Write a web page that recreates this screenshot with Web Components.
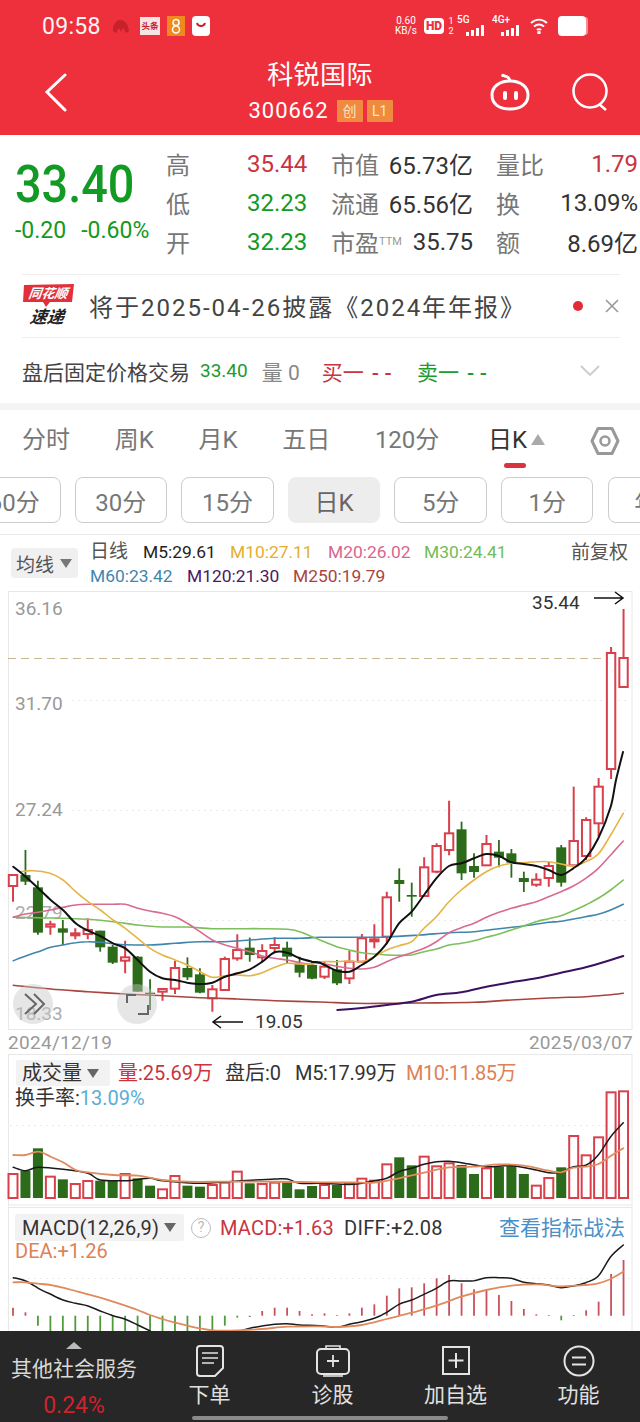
<!doctype html>
<html lang="zh"><head><meta charset="utf-8"><title>科锐国际</title>
<style>
html,body{margin:0;padding:0;background:#fff}
body{width:640px;height:1422px;overflow:hidden;font-family:Roboto,"Noto Sans CJK SC",sans-serif;color:#333}
</style></head><body>
<top-bar></top-bar>
<quote-panel></quote-panel>
<news-row></news-row>
<trade-row></trade-row>
<div style="height:7px;background:#f4f4f4"></div>
<period-tabs></period-tabs>
<sub-tabs>
  <period-chip>60分</period-chip><period-chip>30分</period-chip><period-chip>15分</period-chip><period-chip active>日K</period-chip><period-chip>5分</period-chip><period-chip>1分</period-chip><period-chip>年K</period-chip>
</sub-tabs>
<ma-legend></ma-legend>
<kline-chart></kline-chart>
<date-axis></date-axis>
<vol-panel></vol-panel>
<macd-panel></macd-panel>
<bottom-bar>
  <bar-item><svg slot="icon" width="30" height="34" viewBox="0 0 30 34" fill="none" stroke="#e4e4e4" stroke-width="2"><path d="M5 2h20a3 3 0 0 1 3 3v19l-8 8H5a3 3 0 0 1-3-3V5a3 3 0 0 1 3-3z"/><path d="M7 9h16M7 14h16M7 19h12" stroke-width="1.6"/></svg>下单</bar-item>
  <bar-item><svg slot="icon" width="36" height="34" viewBox="0 0 36 34" fill="none" stroke="#e4e4e4" stroke-width="2"><path d="M11 4V2h14v2" stroke-width="1.6"/><rect x="2" y="5" width="32" height="25" rx="4"/><path d="M8 32h20" stroke-width="1.6"/><path d="M18 11v12M12 17h12" stroke-width="1.8"/></svg>诊股</bar-item>
  <bar-item><svg slot="icon" width="30" height="34" viewBox="0 0 30 34" fill="none" stroke="#e4e4e4" stroke-width="2"><rect x="2" y="3" width="26" height="27"/><path d="M15 9v15M7.500 16.500h15"/></svg>加自选</bar-item>
  <bar-item><svg slot="icon" width="32" height="34" viewBox="0 0 32 34" fill="none" stroke="#e4e4e4" stroke-width="2"><circle cx="16" cy="17" r="14.500"/><path d="M9 13.500h14M9 20.500h14"/></svg>功能</bar-item>
</bottom-bar>
<script>
function def(name,css,html){customElements.define(name,class extends HTMLElement{constructor(){super();this.attachShadow({mode:'open'}).innerHTML='<style>:host{display:block}'+css+'</style>'+html}})}
const RED='#d8404c',GRN='#2b6b19';
const smooth=(pts,color,w=1.6)=>{let d='M'+pts[0][0].toFixed(1)+' '+pts[0][1].toFixed(1);
  for(let i=0;i<pts.length-1;i++){const p0=pts[i-1]||pts[i],p1=pts[i],p2=pts[i+1],p3=pts[i+2]||p2;
    const c1=[p1[0]+(p2[0]-p0[0])/6,p1[1]+(p2[1]-p0[1])/6],c2=[p2[0]-(p3[0]-p1[0])/6,p2[1]-(p3[1]-p1[1])/6];
    d+=`C${c1[0].toFixed(1)} ${c1[1].toFixed(1)} ${c2[0].toFixed(1)} ${c2[1].toFixed(1)} ${p2[0].toFixed(1)} ${p2[1].toFixed(1)}`}
  return `<path d="${d}" fill="none" stroke="${color}" stroke-width="${w}" stroke-linecap="round"/>`};
const cx=i=>13+12.46*i;

/* ---------- top bar ---------- */
def('top-bar',`
:host{background:#ee303d;color:#fff;height:135px;box-sizing:border-box}
.st{height:52px;display:flex;align-items:center;padding-left:42px;position:relative}
.t{font-size:23px;letter-spacing:.3px;width:70px;opacity:.95}
.st svg{display:block}
.tt{width:20px;height:18px;background:#f6e3e3;color:#c7212c;font-size:8.500px;line-height:18px;text-align:center;margin-right:7px;font-weight:700;white-space:nowrap;overflow:hidden}
.r{margin-left:auto;display:flex;align-items:center;padding-right:50px}
.sp{font-size:10px;line-height:10px;text-align:center;width:24px;margin-right:6px}
.hd{background:#fff;color:#ee303d;font-weight:900;font-size:12px;border-radius:4px;width:20px;height:16px;line-height:16px;text-align:center}
.fr{font-size:9px;line-height:10px;width:10px;margin:0 1px 0 2px;text-align:center}
.sig{font-size:10px;line-height:10px;position:relative;width:29px;height:20px;margin-right:6px}
.sig svg{position:absolute;left:7px;bottom:0}
.sig b{font-weight:500;position:absolute;left:0;top:-1px}
.hdr{height:83px;display:grid;grid-template-columns:150px 340px 150px;align-items:start}
.back{padding:21px 0 0 44px}
.mid{text-align:center;padding-top:7px}
.name{font-size:26px;line-height:32px;letter-spacing:.4px}
.code{display:flex;justify-content:center;align-items:center;gap:4px;margin-top:8px;height:24px;padding-left:1px}
.code span{font-size:22px;letter-spacing:1px;margin-right:4px;line-height:24px}
.code i{font-style:normal;background:#f08a3e;color:#fde3c5;font-size:14px;width:26px;height:22px;line-height:22px;text-align:center;border-radius:1px}
.ic{display:flex;padding:21px 32px 0 0;gap:42px;justify-content:flex-end}
.ic svg{flex:none}
`,`<div class="st"><div class="t">09:58</div>
<svg width="20" height="20" viewBox="0 0 20 20" style="margin:0 9px 0 -1px"><path d="M2 15c0-7 3-11 7-11 5 0 8 4 9 11l-3 2-3-5-2 4-2-4-3 5z" fill="#c7212c"/></svg>
<div class="tt">头条</div>
<svg width="18" height="20" viewBox="0 0 18 20" style="margin-right:7px"><rect width="18" height="20" fill="#f08a1e"/><circle cx="9" cy="6.500" r="3" fill="none" stroke="#fff" stroke-width="1.500"/><circle cx="9" cy="13.500" r="3.500" fill="none" stroke="#fff" stroke-width="1.500"/></svg>
<svg width="18" height="20" viewBox="0 0 18 20"><rect width="18" height="20" rx="4" fill="#fff"/><path d="M5 7c1 4 7 4 8 0" fill="none" stroke="#c7212c" stroke-width="2"/></svg>
<div class="r"><div class="sp">0.60<br>KB/s</div><div class="hd">HD</div><div class="fr">1<br>2</div>
<div class="sig"><b>5G</b><svg width="22" height="11" viewBox="0 0 22 11" fill="#fff"><rect x="2" y="7" width="3" height="4"/><rect x="7" y="5" width="3" height="6"/><rect x="12" y="3" width="3" height="8"/><rect x="17" y="0" width="3" height="11"/></svg></div>
<div class="sig"><b>4G+</b><svg width="22" height="11" viewBox="0 0 22 11" fill="#fff"><rect x="2" y="7" width="3" height="4"/><rect x="7" y="5" width="3" height="6"/><rect x="12" y="3" width="3" height="8"/><rect x="17" y="0" width="3" height="11"/></svg></div>
<svg width="18" height="16" viewBox="0 0 18 16" fill="none" stroke="#fff" stroke-width="2" style="margin:0 10px 0 3px"><path d="M1 5c5-4.500 11-4.500 16 0M4 8.500c3-2.500 7-2.500 10 0M7 12c1-1 3-1 4 0"/><circle cx="9" cy="14.500" r=".8" fill="#fff"/></svg>
<svg width="32" height="20" viewBox="0 0 32 20"><rect width="28" height="20" rx="4" fill="#fff"/><rect x="24" y="1" width="6" height="18" rx="3" fill="#fff" opacity=".45"/></svg>
</div></div>
<div class="hdr"><div class="back"><svg width="24" height="40" viewBox="0 0 24 40" fill="none" stroke="#fff" stroke-width="3" stroke-linecap="round"><path d="M21 2 3 19l18 18"/></svg></div>
<div class="mid"><div class="name">科锐国际</div><div class="code"><span>300662</span><i>创</i><i>L1</i></div></div>
<div class="ic"><svg width="40" height="38" viewBox="0 0 40 38" fill="none" stroke="#fff" stroke-width="3"><circle cx="13" cy="2.500" r="1.800" fill="#fff" stroke="none"/><path d="M14 3c3 0 6 2 6 6"/><path d="M20 8c11 0 18 6 18 14 0 9-7 14-18 14S2 31 2 22C2 14 9 8 20 8z"/><rect x="13" y="18" width="4" height="9" rx="2" fill="#fff" stroke="none"/><rect x="24" y="18" width="4" height="9" rx="2" fill="#fff" stroke="none"/></svg>
<svg width="36" height="38" viewBox="0 0 36 38" fill="none" stroke="#fff" stroke-width="2.500"><circle cx="18" cy="18" r="16.500"/><path d="M27 31l7 6"/></svg></div></div>`);

/* ---------- quote ---------- */
def('quote-panel',`
:host{height:139px;box-sizing:border-box;padding-top:9px;display:flex}
.l{width:166px;padding-left:15px;box-sizing:border-box;color:#129a24}
.big{font-size:52px;font-weight:500;line-height:56px;margin-top:13px;transform:scaleX(.9);transform-origin:0 50%;white-space:nowrap}
.ch{display:flex;gap:15px;font-size:23px;line-height:24px;margin-top:6px;white-space:nowrap}
.g{display:grid;grid-template-columns:81px 84px 142px 23px 142px;grid-auto-rows:39px;align-items:center;font-size:24px;white-space:nowrap}
.lb{color:#777}.v{color:#333}
.pair{display:flex;justify-content:space-between;align-items:center}
.rd{color:#c8353f}.gn{color:#129a24}
sup{font-size:11px;vertical-align:7px;line-height:0;color:#999}
`,`<div class="l"><div class="big">33.40</div><div class="ch"><span>-0.20</span><span>-0.60%</span></div></div>
<div class="g">
<span class="lb">高</span><span class="rd">35.44</span><span class="pair"><span class="lb">市值</span><span class="v">65.73亿</span></span><span></span><span class="pair"><span class="lb">量比</span><span class="rd">1.79</span></span>
<span class="lb">低</span><span class="gn">32.23</span><span class="pair"><span class="lb">流通</span><span class="v">65.56亿</span></span><span></span><span class="pair"><span class="lb">换</span><span class="v">13.09%</span></span>
<span class="lb">开</span><span class="gn">32.23</span><span class="pair"><span class="lb">市盈<sup>TTM</sup></span><span class="v">35.75</span></span><span></span><span class="pair"><span class="lb">额</span><span class="v">8.69亿</span></span>
</div>`);

/* ---------- news ---------- */
def('news-row',`
:host{margin:0 20px 0 22px;height:64px;box-sizing:border-box;border-top:1px solid #eee;border-bottom:1px solid #eee;display:flex;align-items:center}
.logo{width:52px;height:44px;position:relative;margin-right:15px;flex:none;text-align:center;font-style:italic;font-weight:700}
.logo svg{display:block}
.a{position:absolute;left:0;right:0;top:1px;font-size:13px;line-height:18px;color:#fff;transform:skewX(-8deg)}
.b{position:absolute;left:0;right:2px;top:23px;font-size:17px;line-height:21px;color:#222;transform:skewX(-8deg)}
.t{font-size:24px;color:#444;white-space:nowrap;letter-spacing:2px;margin-top:-2px}
.dot{width:10px;height:10px;border-radius:50%;background:#e22b37;margin-left:auto;margin-right:21px;flex:none}
svg.x{margin-right:0;flex:none}
`,`<div class="logo"><svg width="52" height="24" viewBox="0 0 52 24"><path d="M2 1 52 0l-2 18H28l-4 5-3-5H1z" fill="#e2303b"/></svg><span class="a">同花顺</span><span class="b">速递</span></div>
<span class="t">将于2025-04-26披露《2024年年报》</span><i class="dot"></i>
<svg class="x" width="16" height="16" viewBox="0 0 16 16" stroke="#999" stroke-width="1.600"><path d="M2 2l12 12M14 2 2 14"/></svg>`);

def('trade-row',`
:host{height:65px;display:flex;align-items:center;padding:0 40px 0 22px;font-size:21px;white-space:nowrap;color:#444}
.g{color:#1d9a30}.m{color:#888}.r{color:#c9343e}
span{display:inline-block}
b{font-weight:500;letter-spacing:5.500px;margin-left:8px}
svg{margin-left:auto}
`,`<span style="margin-right:10px">盘后固定价格交易</span><span class="g" style="font-size:19px;margin-right:14px">33.40</span><span class="m" style="margin-right:22px">量 0</span><span class="r" style="margin-right:20px">买一<b>--</b></span><span class="g">卖一<b>--</b></span>
<svg width="20" height="12" viewBox="0 0 20 12" fill="none" stroke="#ccc" stroke-width="1.800"><path d="M1 1l9 9 9-9"/></svg>`);

/* ---------- tabs ---------- */
def('period-tabs',`
:host{height:67px;box-sizing:border-box;padding:18px 22px 0;display:flex;gap:44.700px;font-size:24px;color:#777;line-height:25px;position:relative;white-space:nowrap}
.on{color:#333;position:relative;display:flex;margin-left:4px}
.on svg{margin:6px 0 0 4px}
.on::after{content:"";position:absolute;left:16px;top:35px;width:22px;height:5px;border-radius:3px;background:#d9333f}
.gear{margin-left:auto;margin-right:-2px;margin-top:-3px}
`,`<span>分时</span><span>周K</span><span>月K</span><span>五日</span><span>120分</span><span class="on">日K<svg width="14" height="11" viewBox="0 0 14 11"><path d="M7 0l7 11H0z" fill="#aaa"/></svg></span>
<svg class="gear" width="30" height="32" viewBox="0 0 30 32" fill="none" stroke="#999" stroke-width="3"><path d="M8 3.500h14L28 16l-6 12.500H8L2 16z" stroke-linejoin="round"/><circle cx="15" cy="16" r="4.500" stroke-width="2.500"/></svg>`);

def('sub-tabs',`:host{height:57px;margin-left:-32px;width:720px;display:block;overflow:hidden}
.w{display:flex;gap:14.100px;height:46px}`,`<div class="w"><slot></slot></div>`);
customElements.define('period-chip',class extends HTMLElement{constructor(){super();this.attachShadow({mode:'open'}).innerHTML=`<style>
:host{display:flex;flex:none;width:92.500px;height:46px;box-sizing:border-box;border:1px solid #ccc;border-radius:8px;align-items:center;justify-content:center;font-size:24px;color:#777}
:host([active]){background:#ededed;border-color:#ededed;color:#666}
</style><slot></slot>`}});

/* ---------- MA legend ---------- */
def('ma-legend',`
:host{height:57px;box-sizing:border-box;border-top:1px solid #e8e8e8;display:flex;padding-left:11px;position:relative;white-space:nowrap}
.pill{width:67px;height:30px;margin-top:13px;background:#f0f0f0;border-radius:4px;font-size:19px;color:#555;display:flex;align-items:center;padding-left:5px;box-sizing:border-box;gap:6px;margin-right:12px}
.rows{font-size:17.400px;line-height:24px;padding-top:5px}
.rows div{display:flex}
.q{position:absolute;right:12px;top:6px;font-size:19px;line-height:24px;color:#555}
`,`<div class="pill">均线<svg width="12" height="9" viewBox="0 0 12 9"><path d="M0 0h12L6 9z" fill="#777"/></svg></div>
<div class="rows"><div><span style="width:53px;color:#555;font-size:19px">日线</span><span style="width:87px;color:#222">M5:29.61</span><span style="width:98px;color:#e3ae33">M10:27.11</span><span style="width:96px;color:#d9668d">M20:26.02</span><span style="color:#72bb58">M30:24.41</span></div>
<div><span style="width:97px;color:#3f85ac">M60:23.42</span><span style="width:106px;color:#4b1766">M120:21.30</span><span style="color:#a8443e">M250:19.79</span></div></div>
<div class="q">前复权</div>`);

/* ---------- K line ---------- */
customElements.define('kline-chart',class extends HTMLElement{constructor(){super();
 const A=[['r',135,135,168,215],['g',60,135,155,165],['g',152,172,308,314],['r',272,283,290,314],['g',270,295,308,345],['r',295,310,316,328],['r',265,300,312,328],['g',302,302,352,365],['g',345,350,398,402],['r',332,382,392,430],['g',378,380,485,485],['g',448,488,492,540],['r',475,477,485,512],['r',392,414,476,492],['g',382,414,442,450],['g',415,433,488,490],['r',465,478,505,545],['r',380,387,480,480],['r',313,360,385,392],['g',323,353,375,395],['r',343,363,382,397],['r',322,345,354,368],['g',335,353,380,400],['g',380,402,428,442],['g',395,405,446,448]].map(c=>[c[0],...c.slice(1).map(v=>830+v/3)]);
 const B=[['r',545,560,590,597],['g',540,568,610,615],['r',512,545,595,612],['r',462,475,545,545],['r',433,478,484,505],['r',335,352,470,490],['g',265,300,312,365],['g',308,345,350,410],['r',232,262,348,350],['r',190,198,275,280],['r',62,160,210,226],['g',125,148,280,300],['g',220,258,276,293],['r',165,192,256,258],['g',180,215,233,262],['g',207,220,248,293],['g',275,294,306,336],['r',280,299,314,320],['r',245,258,294,320],['g',195,202,308,320],['r',20,183,256,256],['r',112,120,228,240]].map(c=>[c[0],...c.slice(1).map(v=>780+v/3)]);
 const C=[['r',778,786.700,823.300,836.700],['r',647,653,769,779],['r',609,658,687,687]];
 let cs='';[...A,...B,...C].forEach((c,i)=>{const x=cx(i),[t,h,o,b,l]=c;
  if(t==='g'){cs+=`<path d="M${x} ${h}V${l}" stroke="${GRN}" stroke-width="1.800"/><rect x="${x-5}" y="${o}" width="10" height="${b-o}" fill="${GRN}"/>`}
  else{cs+=`<path d="M${x} ${h}V${o}M${x} ${b}V${l}" stroke="${RED}" stroke-width="2"/><rect x="${x-4.200}" y="${o}" width="8.400" height="${Math.max(b-o,1)}" fill="#fff" stroke="${RED}" stroke-width="2"/>`}});
 const L=(a,b)=>[...a.map(p=>[p[0]/3,830+p[1]/3]),...b.map(p=>[320+p[0]/3,780+p[1]/3])];
 const m5=L([[40,110],[77,140],[115,175],[152,210],[189,240],[227,280],[264,302],[301,318],[339,340],[376,355],[413,390],[450,425],[487,445],[525,450],[562,458],[600,462],[637,458],[675,440],[712,430],[750,418],[787,395],[824,367],[862,368],[899,385],[936,395]],[[0,548],[50,572],[88,575],[125,555],[163,530],[200,490],[237,430],[275,395],[312,345],[349,295],[387,258],[424,250],[462,235],[499,222],[537,228],[574,247],[611,252],[649,258],[686,270],[723,285],[760,265],[797,235],[835,175],[872,80],[888,0]]);m5.push([623,752]);
 const m10=L([[60,125],[100,122],[150,130],[189,150],[227,185],[264,215],[301,240],[339,270],[376,295],[413,325],[450,355],[487,375],[525,390],[562,405],[600,425],[637,442],[675,437],[712,435],[750,437],[787,428],[824,412],[862,400],[899,402],[936,402]],[[0,545],[50,545],[88,543],[125,545],[163,530],[200,510],[237,497],[275,485],[312,445],[349,410],[387,365],[424,330],[462,300],[499,275],[537,258],[574,250],[611,248],[649,245],[686,245],[723,252],[760,258],[797,245],[835,222],[872,165],[910,100]]);
 const m20=L([[40,262],[77,252],[115,247],[152,240],[189,232],[227,225],[264,223],[301,223],[339,223],[376,223],[413,235],[450,243],[487,250],[525,260],[562,280],[600,305],[637,330],[675,345],[712,355],[750,365],[787,378],[824,385],[862,390],[899,398],[936,402]],[[0,550],[88,565],[125,567],[163,562],[200,545],[237,530],[275,518],[312,505],[349,485],[387,458],[424,443],[462,430],[499,412],[537,397],[574,385],[611,375],[649,365],[686,350],[723,335],[760,318],[797,295],[835,265],[872,225],[910,183]]);
 const m30=L([[40,262],[115,263],[189,265],[264,268],[339,275],[413,285],[487,291],[562,291],[637,296],[712,296],[787,296],[862,298],[899,305],[936,320]],[[0,480],[50,500],[88,510],[125,518],[163,522],[200,525],[237,526],[275,525],[312,515],[349,507],[387,495],[424,490],[462,482],[499,472],[537,462],[574,450],[611,438],[649,425],[686,416],[723,407],[760,392],[797,375],[835,355],[872,330],[910,300]]);
 const m60=L([[40,392],[77,378],[115,365],[152,352],[189,345],[227,338],[264,335],[301,337],[339,341],[376,344],[450,345],[525,340],[600,335],[675,335],[750,330],[824,325],[900,325]],[[0,472],[100,472],[200,471],[300,465],[387,458],[462,455],[537,446],[611,438],[686,427],[723,424],[797,410],[835,403],[872,390],[910,373]]);
 const m120=L([],[[52,690],[125,684],[200,675],[275,665],[349,645],[424,637],[499,620],[574,607],[649,595],[723,578],[797,562],[872,540],[910,528]]);
 const m250=L([[40,466],[152,477],[264,485],[376,492],[487,497],[600,503],[712,507],[824,512]],[[0,666],[100,670],[200,670],[300,669],[462,667],[574,660],[686,654],[797,650],[872,644],[910,640]]);
 const ax=(t,y,o=1)=>`<text x="15" y="${y}" font-size="19" fill="#999" opacity="${o}">${t}</text>`;
 this.attachShadow({mode:'open'}).innerHTML=`<style>:host{display:block;height:440px}svg{display:block;overflow:visible;font-family:Roboto,"Noto Sans CJK SC",sans-serif}</style>
 <svg width="640" height="440" viewBox="0 591 640 440">
 <rect x="8.500" y="591.500" width="623.500" height="438" fill="#fff" stroke="#e8e8e8"/>
 <path d="M72 700.500H630M72 810.500H630M72 920.500H630" stroke="#ebebeb" stroke-dasharray="2 4"/>
 <path d="M8 658.500H632" stroke="#c9b792" stroke-dasharray="8 5"/>
 ${ax('36.16',615)}${ax('31.70',710)}${ax('27.24',816)}${ax('22.79',919,.8)}${ax('18.33',1020,.8)}
 ${cs}
 ${smooth(m250,'#a8443e')}${smooth(m120,'#3b1060',2)}${smooth(m60,'#3f85ac')}${smooth(m30,'#7cbf5c')}${smooth(m20,'#d96a90')}${smooth(m10,'#e6b445')}${smooth(m5,'#111',2)}
 <text x="532" y="609" font-size="19" fill="#333">35.44</text>
 <path d="M594 598h29M615 592l8 6-8 6" fill="none" stroke="#111" stroke-width="1.500"/>
 <text x="255" y="1028" font-size="19" fill="#333">19.05</text>
 <path d="M243 1022h-30M221 1016l-8 6 8 6" fill="none" stroke="#111" stroke-width="1.500"/>
 <circle cx="33" cy="1004" r="20" fill="#c8c8c8" opacity=".45"/>
 <path d="M25 994l11 10-11 10M34 994l10 10-10 10" fill="none" stroke="#666" stroke-width="2"/>
 <circle cx="137" cy="1004" r="20" fill="#c8c8c8" opacity=".45"/>
 <path d="M127 1003v-8h9M148 1005v9h-10" fill="none" stroke="#666" stroke-width="2"/>
 </svg>`}});

def('date-axis',`:host{height:22px;box-sizing:border-box;padding:2px 7px 0 8px;display:flex;justify-content:space-between;font-size:19px;line-height:20px;color:#999;letter-spacing:.3px}`,`<span>2024/12/19</span><span>2025/03/07</span>`);

/* ---------- volume ---------- */
customElements.define('vol-panel',class extends HTMLElement{constructor(){super();
 const tops=[372,362,295,380,388,402,393,392,393,372,385,407,418,378,407,410,405,398,365,400,402,398,397,418,408,405,405,402,386,392,343,322,346,320,349,340,345,372,355,350,345,372,407,384,352,258,316,262,127,124];
 const up=new Set([0,3,5,6,9,12,13,16,17,18,20,21,25,27,28,29,30,33,34,35,38,42,43,45,46,47,48,49]);
 let s='';tops.forEach((z,i)=>{const x=cx(i),y=1050+z/3,b=1198;
  s+=up.has(i)?`<rect x="${x-4.500}" y="${y}" width="9" height="${b-y}" fill="#fff" stroke="${RED}" stroke-width="2"/>`:`<rect x="${x-5}" y="${y}" width="10" height="${b-y}" fill="${GRN}"/>`});
 const L=(a,b)=>[...a.map(p=>[p[0]/3,1050+p[1]/3]),...b.map(p=>[320+p[0]/3,1050+p[1]/3])];
 const m5=L([[40,352],[77,362],[115,352],[189,358],[264,370],[301,390],[376,392],[450,385],[487,392],[600,400],[712,393],[824,387],[862,387],[899,400]],[[0,400],[100,403],[163,392],[200,385],[237,365],[275,355],[312,343],[349,335],[387,334],[424,338],[499,350],[574,347],[649,360],[686,368],[723,367],[760,350],[797,346],[835,315],[872,260],[910,218]]);
 const m10=L([[40,315],[77,315],[115,305],[152,320],[189,337],[227,360],[264,367],[339,375],[413,377],[487,390],[562,395],[675,395],[787,395],[900,396]],[[0,397],[100,397],[163,398],[237,385],[312,368],[387,352],[462,350],[537,343],[611,347],[686,362],[723,367],[760,353],[797,350],[835,342],[872,318],[910,295]]);
 this.attachShadow({mode:'open'}).innerHTML=`<style>
 :host{display:grid;height:153px}
 :host>*{grid-area:1/1}
 svg{display:block}
 .lg{font-size:20px;line-height:24px;white-space:nowrap;padding:7px 0 0 15px;color:#333}
 .a{display:flex;align-items:center}
 .pill{width:94px;height:26px;margin:0 8px 0 1px;background:#f2f2f2;display:flex;align-items:center;box-sizing:border-box;padding-left:6px;gap:5px;border-radius:2px}
 .r{color:#c8353f}.o{color:#de8155;letter-spacing:-.5px}.b{color:#58aed6}
 </style><svg width="640" height="153" viewBox="0 1053 640 153">
 <rect x="8.500" y="1054.500" width="623.500" height="150.500" fill="#fff" stroke="#e8e8e8"/>
 <path d="M10 1125.500H630" stroke="#ebebeb" stroke-dasharray="2 4"/>
 ${s}${smooth(m5,'#1a1a1a',1.500)}${smooth(m10,'#e08a5e',1.800)}</svg>
 <div class="lg"><div class="a"><span class="pill">成交量<svg width="12" height="9" viewBox="0 0 12 9"><path d="M0 0h12L6 9z" fill="#666"/></svg></span><span class="r" style="width:107px">量:25.69万</span><span style="width:70px">盘后:0</span><span style="width:111px;letter-spacing:-.3px">M5:17.99万</span><span class="o">M10:11.85万</span></div>
 <div>换手率:<span class="b">13.09%</span></div></div>`}});

/* ---------- MACD ---------- */
customElements.define('macd-panel',class extends HTMLElement{constructor(){super();
 const z=1315.700;
 const h=[[0,308],[1,322],[2,362],[3,385],[4,385],[5,385],[6,385],[7,385],[8,385],[9,385],[10,385],[11,385],[12,385],[13,385],[14,385],[15,385],[16,385],[17,362],[18,338],[19,336],[20,318],[21,308],[22,308],[23,318],[24,328],[25,325],[26,330],[27,325],[28,308],[29,298],[30,272],[31,250],[32,247],[33,235],[34,220],[35,210],[36,235],[37,253],[38,255],[39,270],[40,288],[41,312],[42,328],[43,330],[44,346],[45,330],[46,316],[47,290],[48,207],[49,165]];
 let s='';h.forEach(([i,v])=>{const y=1205+v/3,g=y>z;s+=`<path d="M${cx(i)} ${z}V${y}" stroke="${g?'#4f9a3c':'#c9505a'}" stroke-width="1.800"/>`});
 const L=(a,b)=>[...a.map(p=>[p[0]/3,1205+p[1]/3]),...b.map(p=>[320+p[0]/3,1205+p[1]/3])];
 const d=L([[40,218],[77,228],[115,250],[152,268],[189,285],[227,295],[264,303],[301,318],[339,332],[376,343],[413,360],[450,378],[487,400],[600,410],[700,385],[750,370],[824,358],[862,356],[900,360]],[[0,362],[50,367],[88,358],[125,350],[163,340],[200,322],[237,298],[275,285],[312,268],[349,250],[387,228],[424,228],[462,227],[499,218],[537,218],[574,220],[611,232],[649,236],[686,240],[723,248],[760,243],[797,233],[835,213],[872,155],[910,120]]);
 const e=L([[40,232],[77,232],[115,236],[152,240],[189,248],[227,258],[264,268],[301,278],[339,290],[376,302],[413,315],[450,330],[487,342],[525,353],[562,362],[600,370],[637,376],[712,376],[787,372],[862,365]],[[0,364],[50,366],[125,360],[200,342],[275,323],[349,302],[424,275],[499,255],[574,242],[649,238],[723,244],[797,240],[835,235],[872,222],[910,200]]);
 this.attachShadow({mode:'open'}).innerHTML=`<style>
 :host{display:grid;height:125px;overflow:hidden}
 :host>*{grid-area:1/1}
 svg{display:block}
 .lg{font-size:20px;line-height:24px;white-space:nowrap;padding:8px 0 0 15px;color:#333}
 .a{display:flex;align-items:center}
 .pill{width:169px;height:27px;background:#f2f2f2;display:flex;align-items:center;box-sizing:border-box;padding-left:7px;gap:5px;border-radius:2px;margin-right:7px;letter-spacing:.2px}
 .q{width:20px;height:20px;border:1.500px solid #bbb;border-radius:50%;box-sizing:border-box;color:#bbb;font-size:14px;line-height:17px;text-align:center;margin-right:9px}
 .r{color:#c8353f;letter-spacing:.2px}.o{color:#de8155;margin-top:-2px}.l{color:#4a90c8;margin-left:auto;margin-right:15px;font-size:21px}
 </style><svg width="640" height="125" viewBox="0 1206 640 125">
 <path d="M8.500 1206V1331M632 1206V1331M9 1207.500H632" fill="none" stroke="#e8e8e8"/>
 <path d="M10 1278.500H630" stroke="#ebebeb" stroke-dasharray="2 4"/>
 ${s}${smooth(d,'#1a1a1a',1.500)}${smooth(e,'#e08a5e',1.800)}</svg>
 <div class="lg"><div class="a"><span class="pill">MACD(12,26,9)<svg width="12" height="9" viewBox="0 0 12 9"><path d="M0 0h12L6 9z" fill="#666"/></svg></span><span class="q">?</span><span class="r" style="width:124px">MACD:+1.63</span><span style="letter-spacing:.3px">DIFF:+2.08</span><span class="l">查看指标战法</span></div>
 <div class="o">DEA:+1.26</div></div>`}});

/* ---------- bottom ---------- */
def('bottom-bar',`
:host{height:91px;background:#272727;display:flex;position:relative;color:#e0e0e0}
.s{width:148px;flex:none;text-align:center;padding-top:11px;box-sizing:border-box}
.s svg{display:block;margin:0 auto}
.n{font-size:21px;line-height:26px;margin-top:7px;color:#d8d8d8;white-space:nowrap}
.p{font-size:23px;line-height:26px;margin-top:11px;color:#d0222c}
.w{flex:1;display:grid;grid-template-columns:repeat(4,1fr)}
.h{position:absolute;left:192px;top:85px;width:256px;height:4px;border-radius:2px;background:#8a8a8a}
`,`<div class="s"><svg width="16" height="7" viewBox="0 0 16 7"><path d="M8 0l8 7H0z" fill="#bbb"/></svg><div class="n">其他社会服务</div><div class="p">0.24%</div></div><div class="w"><slot></slot></div><i class="h"></i>`);
customElements.define('bar-item',class extends HTMLElement{constructor(){super();this.attachShadow({mode:'open'}).innerHTML=`<style>
:host{display:flex;flex-direction:column;align-items:center;font-size:21px;line-height:26px;color:#e0e0e0;padding-top:13px;box-sizing:border-box}
.i{height:34px;margin-bottom:4px}
</style><div class="i"><slot name="icon"></slot></div><slot></slot>`}});
</script>
</body></html>
